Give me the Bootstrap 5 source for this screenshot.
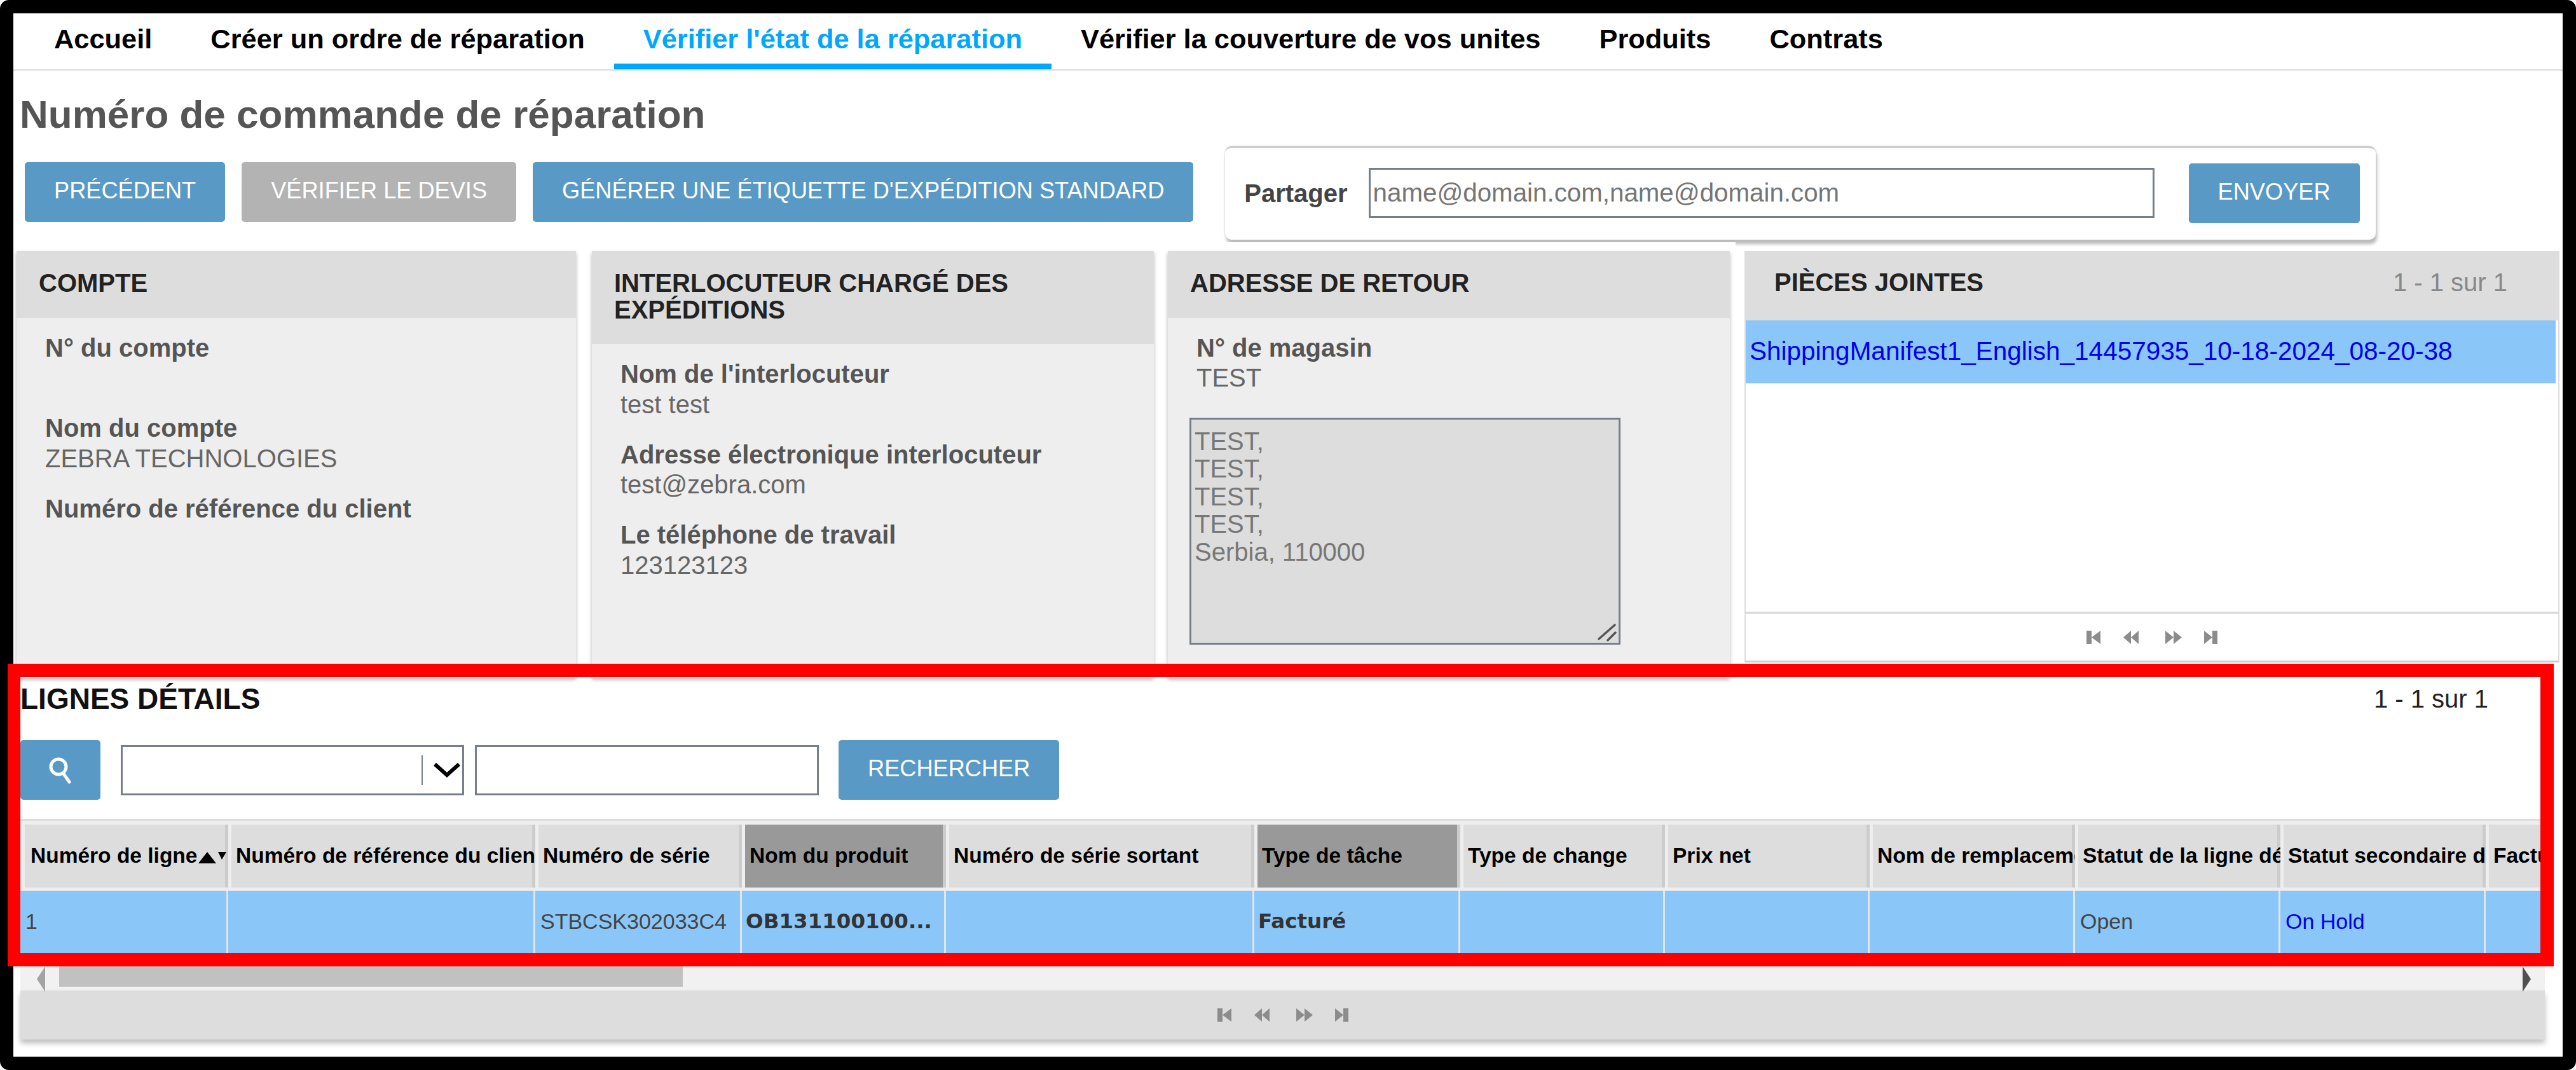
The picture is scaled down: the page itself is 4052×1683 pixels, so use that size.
<!DOCTYPE html>
<html lang="fr">
<head>
    <meta charset="UTF-8">
    <meta name="viewport" content="width=device-width, initial-scale=1">
    <title>Numéro de commande de réparation</title>
    <link href="https://cdn.jsdelivr.net/npm/bootstrap@5.3.0/dist/css/bootstrap.min.css" rel="stylesheet">
    <style>
        body { margin: 0; background: #fff; font-family: "Liberation Sans", Arial, sans-serif; font-size: 40px; overflow: hidden; }
        .shot { position: relative; width: 4052px; height: 1683px; }
        .frame { height: 1683px; border: 21px solid #000; border-radius: 14px; background: #fff; }

        /* top menu */
        .top-menu { border-bottom: 2px solid #ddd; padding-left: 18px; height: 90px; flex-wrap: nowrap; }
        .top-menu .nav-link { padding: 15px 46px 0; font-size: 43.400px; line-height: 51px; font-weight: 700; color: #000; height: 88px; }
        .top-menu .nav-link.active { color: #00a7ff; border-bottom: 9px solid #00a7ff; }

        .page-title { margin: 38px 0 19px; padding-left: 10px; font-size: 62px; line-height: 62px; font-weight: 700; color: #555; }

        /* buttons */
        .btn-steel, .btn-ash { height: 94px; padding: 0 46px 3px; border: 0; border-radius: 5px; font-size: 36.200px; color: #fff; display: inline-flex; align-items: center; white-space: nowrap; }
        .btn-steel { background: #589ac5; }
        .btn-ash { background: #b3b3b3; }
        .btn-steel:hover { background: #589ac5; color: #fff; }
        .btn-ash:hover { background: #b3b3b3; color: #fff; }

        .action-row { height: 147px; padding-left: 18px; }
        .action-btns { margin-top: 25px; gap: 26px; }
        .share-box { width: 1810px; height: 147px; margin-left: 50px; padding: 0 27px 3px 30px; background: #fff; border-radius: 10px; border-top: 3px solid #ccc; box-shadow: 2px 7px 5px #bbb, 0 0 3px #ccc; }
        .share-box label { font-weight: 700; color: #444; margin-right: 33px; }
        .share-input { width: 1236px; height: 79px; margin-right: 54px; padding: 0 4px; font-size: 40.300px; flex: none; }
        .share-input, .line-input, .pick-box { border: 3px solid #777f8a; border-radius: 0; }
        .share-input::placeholder { color: #757575; }

        /* info cards */
        .card-row { height: 685px; margin-top: 4px; }
        .card-group-left { position: relative; width: 2709px; padding: 14px 0 0 5px; gap: 22px; background: #fff; }
        .info-card { width: 884px; border: 0; border-radius: 0; background: #eee; box-shadow: 0 3px 6px rgba(0,0,0,.28); }
        .info-card:nth-child(1) { width: 880px; margin-right: 3px; }
        .info-card:nth-child(2) { width: 884px; }
        .info-card .card-header, .files-card .card-header { padding: 30px 35px 33px; background: #ddd; border: 0; border-radius: 0; font-size: 40px; line-height: 41.500px; font-weight: 700; color: #222; }
        .info-card .card-body { padding: 24px 20px 0 45px; }
        .info-item { height: 126.500px; line-height: 47.500px; color: #666; }
        .info-item strong { display: block; color: #555; }
        .addr-wrap { position: relative; width: 678px; height: 357px; margin: 38px 0 0 -11px; }
        .addr-area { width: 100%; height: 100%; padding: 13px 5px; background: #ddd; border: 3px solid #777f8a; border-radius: 0; color: #777; font-size: 40px; line-height: 43.600px; resize: none; }
        .addr-area:focus { background: #ddd; color: #777; }
        .grip { position: absolute; right: 5px; bottom: 5px; }

        .files-card { width: 1282px; height: 647px; margin: 14px 0 0 14px; border: 0; border-radius: 0; border-left: 2px solid #ddd; border-right: 2px solid #ddd; border-bottom: 3px solid #ccc; background: #fff; }
        .files-card .card-header { height: 109px; padding: 29px 80px 0 45px; line-height: 40px; }
        .files-count { font-weight: 400; color: #888; }
        .file-row { height: 99px; margin-right: 4px; padding: 0 6px; background: #8ac6f7; font-size: 40.500px; line-height: 96px; color: #0000ee; white-space: nowrap; }
        .files-pager { height: 77px; border-top: 4px solid #ddd; }

        /* detail lines */
        .detail-section { width: 3982px; margin-top: 13px; padding-left: 11px; }
        .detail-head { width: 3971px; height: 40px; padding-right: 89px; line-height: 40px; }
        .detail-head strong { color: #111; font-size: 46px; }
        .detail-count { color: #222; }
        .search-row { margin-top: 45px; height: 94px; }
        .search-btn { width: 126px; height: 94px; padding: 0; justify-content: center; }
        .pick-box { position: relative; width: 540px; height: 79px; margin: 0 17px 0 32px; background: #fff; }
        .pick-box select { width: 470px; height: 100%; border: 0; background: transparent; appearance: none; }
        .pick-sep { width: 2px; height: 47px; background: #777f8a; }
        .line-input { width: 541px; height: 79px; margin-right: 31px; flex: none; }

        .grid-wrap { width: 3971px; margin-top: 30px; border-top: 3px solid #ddd; overflow: hidden; }
        .lines-table { table-layout: fixed; width: 4001px; margin: 0; border-collapse: separate; border-spacing: 0; }
        .lines-table > thead > tr > th { height: 110px; padding: 0 0 0 7px; background: #ddd; background-clip: padding-box; border: solid #eee; border-width: 6px 0 5px 5px; box-shadow: inset -5px 0 0 #ccc; font-size: 33.500px; font-weight: 700; color: #000; white-space: nowrap; overflow: hidden; vertical-align: middle; }
        .lines-table > thead > tr > th:first-child { border-left-width: 7px; padding-left: 9px; }
        .lines-table > thead > tr > th.th-marked { background-color: #999; }
        .lines-table > tbody > tr > td { height: 107px; padding: 28px 0 0 8px; background: #8ac6f7; border: 0; border-right: 3px solid #e4e4e4; box-shadow: none; font-size: 34px; line-height: 40px; color: #444; vertical-align: top; white-space: nowrap; overflow: hidden; }
        .lines-table > tbody > tr > td.td-bold { padding-left: 6px; font-family: "DejaVu Sans", sans-serif; font-size: 32.500px; font-weight: 700; color: #333; }
        .lines-table > tbody > tr > td a { color: #0000ee; text-decoration: none; }
        .sort-arrows { margin-left: 2px; vertical-align: -1px; }

        .fake-scroll { width: 3971px; height: 50px; background: #f1f1f1; align-items: flex-start; }
        .scroll-thumb { width: 981px; height: 44px; margin-left: 22px; background: #c1c1c1; }
        .scroll-left { margin: 10px 0 0 26px; }
        .scroll-right { margin: 10px 22px 0 auto; }
        .grid-footer { width: 3971px; height: 77px; background: #ddd; box-shadow: 0 6px 8px rgba(0,0,0,.25); }

        /* the red annotation over the screenshot */
        .red-mark { position: absolute; left: 12px; top: 1044px; width: 4005px; height: 476px; border: solid #f00; border-width: 21px 21px 21px 20px; pointer-events: none; }
    </style>
</head>
<body>

<svg width="0" height="0" class="d-block position-absolute">
    <symbol id="pager" viewBox="0 0 206 21">
        <path fill="#8c8c8c" d="M0 0h8v21H0zM22 0v21L8 10.500zM70 0v21L58 10.500zM82 0v21L70 10.500zM124 0l13 10.500L124 21zM137 0l13 10.500L137 21zM185 0l13 10.500L185 21zM198 0h8v21h-8z"/>
    </symbol>
</svg>

<div class="shot">
    <div class="frame">

        <ul class="nav top-menu">
            <li class="nav-item"><a class="nav-link" href="#">Accueil</a></li>
            <li class="nav-item"><a class="nav-link" href="#">Créer un ordre de réparation</a></li>
            <li class="nav-item"><a class="nav-link active" href="#">Vérifier l'état de la réparation</a></li>
            <li class="nav-item"><a class="nav-link" href="#">Vérifier la couverture de vos unites</a></li>
            <li class="nav-item"><a class="nav-link" href="#">Produits</a></li>
            <li class="nav-item"><a class="nav-link" href="#">Contrats</a></li>
        </ul>

        <h1 class="page-title">Numéro de commande de réparation</h1>

        <div class="d-flex align-items-start action-row">
            <div class="d-flex action-btns">
                <button type="button" class="btn btn-steel">PRÉCÉDENT</button>
                <button type="button" class="btn btn-ash">VÉRIFIER LE DEVIS</button>
                <button type="button" class="btn btn-steel">GÉNÉRER UNE ÉTIQUETTE D'EXPÉDITION STANDARD</button>
            </div>
            <div class="d-flex align-items-center share-box">
                <label for="shareTo">Partager</label>
                <input id="shareTo" type="text" class="form-control share-input" placeholder="name@domain.com,name@domain.com">
                <button type="button" class="btn btn-steel">ENVOYER</button>
            </div>
        </div>

        <div class="d-flex align-items-start card-row">
            <div class="d-flex align-self-stretch card-group-left">
                <div class="card info-card">
                    <div class="card-header">COMPTE</div>
                    <div class="card-body">
                        <div class="info-item"><strong>N° du compte</strong></div>
                        <div class="info-item"><strong>Nom du compte</strong>ZEBRA TECHNOLOGIES</div>
                        <div class="info-item"><strong>Numéro de référence du client</strong></div>
                    </div>
                </div>
                <div class="card info-card">
                    <div class="card-header">INTERLOCUTEUR CHARGÉ DES EXPÉDITIONS</div>
                    <div class="card-body">
                        <div class="info-item"><strong>Nom de l'interlocuteur</strong>test test</div>
                        <div class="info-item"><strong>Adresse électronique interlocuteur</strong>test@zebra.com</div>
                        <div class="info-item"><strong>Le téléphone de travail</strong>123123123</div>
                    </div>
                </div>
                <div class="card info-card">
                    <div class="card-header">ADRESSE DE RETOUR</div>
                    <div class="card-body pb-0">
                        <div class="info-item h-auto"><strong>N° de magasin</strong>TEST</div>
                        <div class="addr-wrap">
                            <textarea class="form-control addr-area" readonly>TEST,
TEST,
TEST,
TEST,
Serbia, 110000</textarea>
                            <svg class="grip" width="32" height="30" viewBox="0 0 32 30"><path d="M3 26 28 4M17 28 29 16" stroke="#555" stroke-width="3.500" stroke-linecap="round"/></svg>
                        </div>
                    </div>
                </div>
            </div>

            <div class="card files-card">
                <div class="card-header d-flex justify-content-between">
                    <span>PIÈCES JOINTES</span>
                    <span class="files-count">1 - 1 sur 1</span>
                </div>
                <div class="file-row">ShippingManifest1_English_14457935_10-18-2024_08-20-38</div>
                <div class="flex-grow-1"></div>
                <div class="files-pager d-flex justify-content-center align-items-center">
                    <svg width="206" height="21"><use href="#pager"/></svg>
                </div>
            </div>
        </div>

        <div class="detail-section">
            <div class="d-flex justify-content-between detail-head">
                <strong>LIGNES DÉTAILS</strong>
                <span class="detail-count">1 - 1 sur 1</span>
            </div>

            <div class="d-flex align-items-center search-row">
                <button type="button" class="btn btn-steel search-btn" aria-label="Rechercher">
                    <svg width="36" height="46" viewBox="0 0 36 46"><circle cx="15" cy="18" r="12" fill="none" stroke="#fff" stroke-width="5"/><path d="M23 29 32 42" stroke="#fff" stroke-width="5" stroke-linecap="round"/></svg>
                </button>
                <div class="d-flex align-items-center pick-box">
                    <select aria-label="Champ"><option></option></select>
                    <span class="pick-sep"></span>
                    <svg class="ms-3" width="44" height="24" viewBox="0 0 44 24"><path d="M3 3 22 20 41 3" fill="none" stroke="#000" stroke-width="6"/></svg>
                </div>
                <input type="text" class="form-control line-input" aria-label="Valeur">
                <button type="button" class="btn btn-steel">RECHERCHER</button>
            </div>

            <div class="grid-wrap">
                <table class="table lines-table">
                    <colgroup>
                        <col style="width:327px"><col style="width:483px"><col style="width:325px"><col style="width:321px">
                        <col style="width:485px"><col style="width:324px"><col style="width:322px"><col style="width:322px">
                        <col style="width:323px"><col style="width:323px"><col style="width:323px"><col style="width:323px">
                    </colgroup>
                    <thead>
                        <tr>
                            <th>Numéro de ligne<svg class="sort-arrows" width="44" height="18" viewBox="0 0 44 18"><path d="M0 18 14 0 28 18zM31 0h13l-7 12z" fill="#000"/></svg></th>
                            <th>Numéro de référence du client</th>
                            <th>Numéro de série</th>
                            <th class="th-marked">Nom du produit</th>
                            <th>Numéro de série sortant</th>
                            <th class="th-marked">Type de tâche</th>
                            <th>Type de change</th>
                            <th>Prix net</th>
                            <th>Nom de remplacement</th>
                            <th>Statut de la ligne détails</th>
                            <th>Statut secondaire de</th>
                            <th>Facture</th>
                        </tr>
                    </thead>
                    <tbody>
                        <tr>
                            <td>1</td>
                            <td></td>
                            <td>STBCSK302033C4</td>
                            <td class="td-bold">OB131100100...</td>
                            <td></td>
                            <td class="td-bold">Facturé</td>
                            <td></td>
                            <td></td>
                            <td></td>
                            <td>Open</td>
                            <td><a href="#">On Hold</a></td>
                            <td></td>
                        </tr>
                    </tbody>
                </table>
            </div>

            <div class="d-flex fake-scroll">
                <svg class="scroll-left" width="13" height="44" viewBox="0 0 13 44"><path d="M13 2v40L0 22z" fill="#a3a3a3"/></svg>
                <div class="scroll-thumb"></div>
                <svg class="scroll-right" width="13" height="44" viewBox="0 0 13 44"><path d="M0 2v40l13-20z" fill="#505050"/></svg>
            </div>
            <div class="d-flex justify-content-center align-items-center grid-footer">
                <svg width="206" height="21"><use href="#pager"/></svg>
            </div>
        </div>

    </div>
    <div class="red-mark"></div>
</div>

<script src="https://cdn.jsdelivr.net/npm/bootstrap@5.3.0/dist/js/bootstrap.bundle.min.js"></script>
</body>
</html>
